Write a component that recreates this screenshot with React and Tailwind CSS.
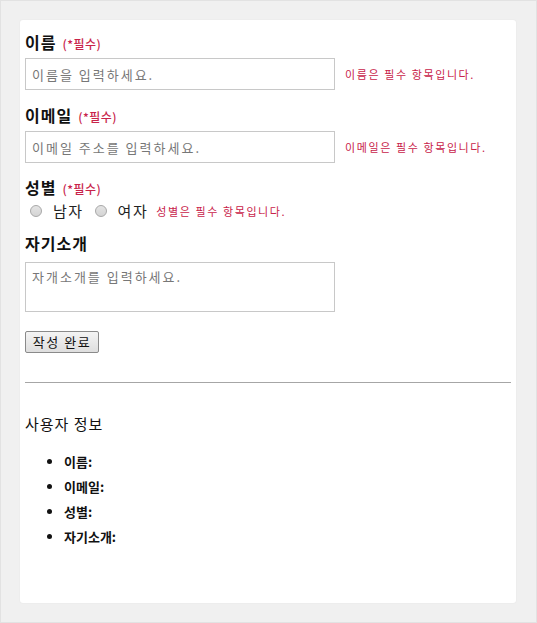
import React, { useState } from 'react'

const font = { fontFamily: '"Noto Sans CJK KR", "Noto Sans", sans-serif' }

function Label({ children, className = '' }) {
  return (
    <div className={`flex items-baseline gap-[6px] h-[20px] leading-[20px] ${className}`}>
      <span className="text-[16px] font-bold tracking-[1px] text-[#111]">{children}</span>
      <span className="text-[12px] font-medium tracking-[0.5px] text-[#c8234a]">(*필수)</span>
    </div>
  )
}

function Radio({ label }) {
  return (
    <label className="flex items-center">
      <span className="w-[12px] h-[12px] ml-[5px] mr-[11px] rounded-full border border-[#a8a8a8] bg-gradient-to-b from-[#e4e4e4] to-[#d4d4d4]" />
      <span className="text-[15px] tracking-[1.5px] text-[#222] mr-[6px]">{label}</span>
    </label>
  )
}

export default function App() {
  const [name, setName] = useState('')
  const [email, setEmail] = useState('')
  const [intro, setIntro] = useState('')

  return (
    <div className="w-[537px] h-[623px] bg-[#f0f0f0] border border-[#e2e2e2] pt-[19px] px-[19px]" style={font}>
      <div className="w-[496px] h-[583px] bg-white rounded-[3px] shadow-[0_0_2px_rgba(0,0,0,0.06)] px-[5px] pt-[12px]">

        {/* 이름 */}
        <Label>이름</Label>
        <div className="flex items-center mt-[6px]">
          <input
            value={name}
            onChange={(e) => setName(e.target.value)}
            placeholder="이름을 입력하세요."
            className="w-[310px] h-[32px] border border-[#c8c8c8] px-[6px] text-[13px] tracking-[2px] placeholder:text-[#777] outline-none"
          />
          <span className="ml-[10px] text-[11px] tracking-[1.6px] text-[#c8234a]">이름은 필수 항목입니다.</span>
        </div>

        {/* 이메일 */}
        <Label className="mt-[15px]">이메일</Label>
        <div className="flex items-center mt-[6px]">
          <input
            value={email}
            onChange={(e) => setEmail(e.target.value)}
            placeholder="이메일 주소를 입력하세요."
            className="w-[310px] h-[32px] border border-[#c8c8c8] px-[6px] text-[13px] tracking-[2px] placeholder:text-[#777] outline-none"
          />
          <span className="ml-[10px] text-[11px] tracking-[1.6px] text-[#c8234a]">이메일은 필수 항목입니다.</span>
        </div>

        {/* 성별 */}
        <Label className="mt-[14px]">성별</Label>
        <div className="flex items-center h-[20px] mt-[4px]">
          <Radio label="남자" />
          <Radio label="여자" />
          <span className="ml-[2px] text-[11px] tracking-[1.6px] text-[#c8234a]">성별은 필수 항목입니다.</span>
        </div>

        {/* 자기소개 */}
        <div className="mt-[12px] h-[20px] leading-[20px] text-[16px] font-bold tracking-[1px] text-[#111]">자기소개</div>
        <textarea
          value={intro}
          onChange={(e) => setIntro(e.target.value)}
          placeholder="자개소개를 입력하세요."
          className="block mt-[9px] w-[310px] h-[50px] border border-[#c8c8c8] px-[6px] py-[6px] text-[13px] tracking-[2px] leading-[16px] placeholder:text-[#777] outline-none resize-none"
        />

        <button className="block mt-[19px] w-[74px] h-[22px] border border-[#8a8a8a] rounded-[2px] bg-gradient-to-b from-[#f4f4f4] to-[#dedede] text-[13px] tracking-[1.5px] text-[#111] leading-[20px]">
          작성 완료
        </button>

        <hr className="mt-[29px] border-0 border-t border-[#a6a6a6]" />

        <div className="mt-[31px] h-[20px] leading-[20px] text-[15px] tracking-[1px] text-[#111]">사용자 정보</div>

        <ul className="mt-[18px] list-disc pl-[39px] text-[13px] font-bold text-[#111]">
          <li className="h-[25px] leading-[20px]">이름:</li>
          <li className="h-[25px] leading-[20px]">이메일:</li>
          <li className="h-[25px] leading-[20px]">성별:</li>
          <li className="h-[25px] leading-[20px]">자기소개:</li>
        </ul>
      </div>
    </div>
  )
}
